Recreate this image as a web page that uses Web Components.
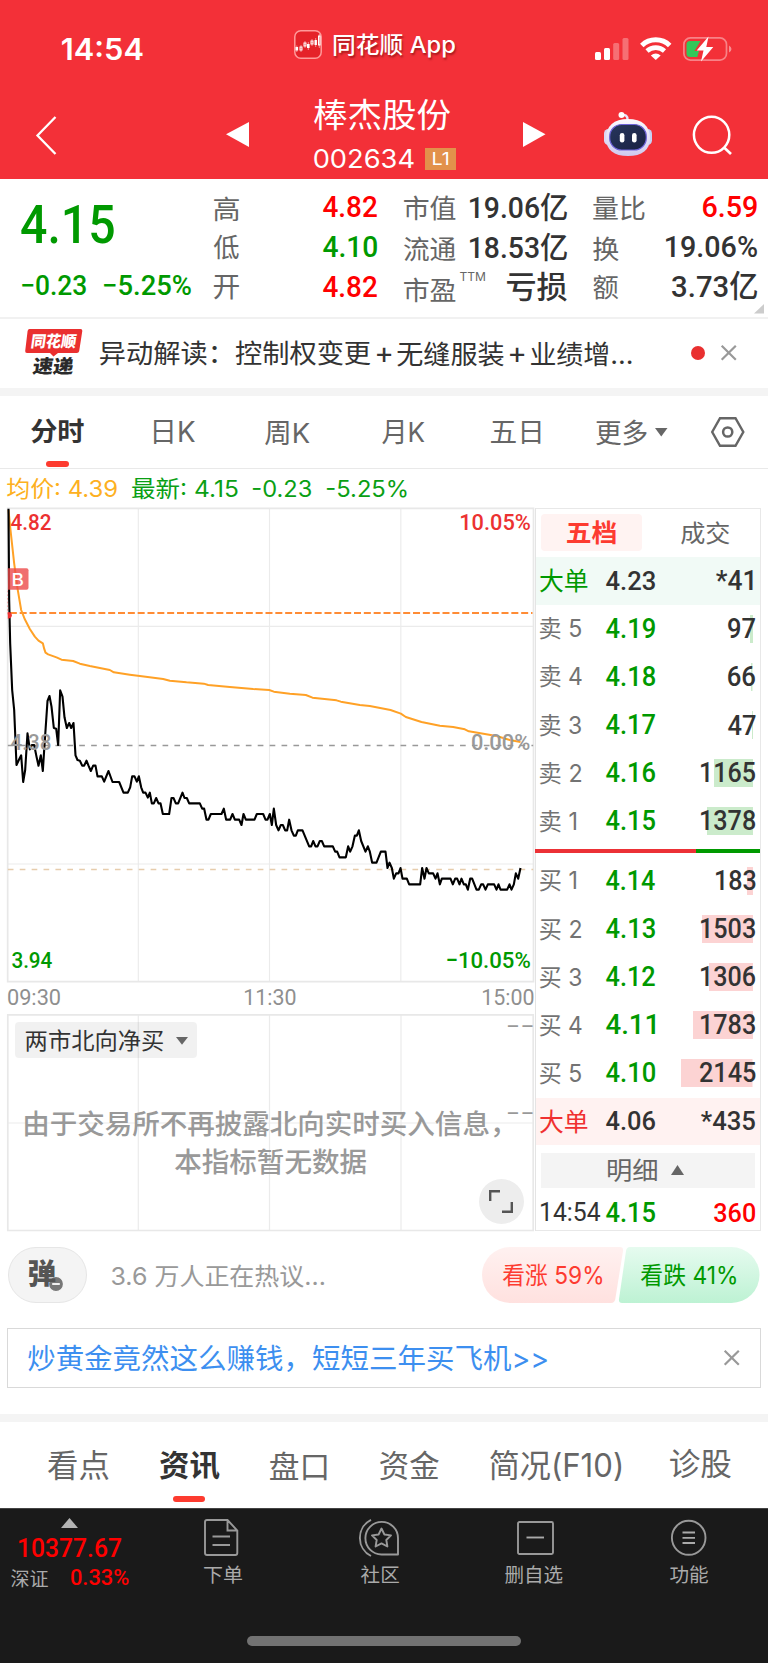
<!DOCTYPE html>
<html lang="zh-CN">
<head>
<meta charset="utf-8">
<title>棒杰股份 002634</title>
<style>
html,body{margin:0;padding:0;background:#fff}
body{width:768px;height:1663px;overflow:hidden;font-family:Inter,"Noto Sans CJK SC",sans-serif;color:#333}
</style>
</head>
<body>
<stock-page></stock-page>
<script>
const UI='Inter, "Noto Sans CJK SC", sans-serif';
const NUM='Roboto, "Noto Sans CJK SC", sans-serif';
const ctx=document.createElement('canvas').getContext('2d');

/* Text fitted to an exact glyph box: width w, height h. */
class FitText extends HTMLElement{
  connectedCallback(){
    const w=+this.getAttribute('w'),h=+this.getAttribute('h');
    const wt=this.getAttribute('weight')||'400';
    const fam=this.getAttribute('font')==='num'?NUM:UI;
    const text=this.textContent;
    ctx.font=`${wt} 100px ${fam}`;
    const m=ctx.measureText(text);
    const inkH=m.actualBoundingBoxAscent+m.actualBoundingBoxDescent;
    const inkW=m.actualBoundingBoxLeft+m.actualBoundingBoxRight;
    const fs=100*h/inkH,k=fs/100,sx=w/(inkW*k);
    const A=Math.round(m.fontBoundingBoxAscent*k),D=Math.round(m.fontBoundingBoxDescent*k);
    const L=Math.round(fs*1.2);
    const base=(L-(A+D))/2+A;
    const ty=m.actualBoundingBoxAscent*k-base, tx=m.actualBoundingBoxLeft*k*sx;
    const feat=text.endsWith('，')?'font-feature-settings:"halt";':'';
    this.attachShadow({mode:'open'}).innerHTML=`<style>
      :host{display:block;flex:none;width:${w}px;height:${h}px;white-space:pre}
      span{display:block;width:max-content;font:${wt} ${fs}px/${L}px ${fam};text-autospace:no-autospace;${feat}
        transform-origin:0 0;transform:translate(${tx}px,${ty}px) scaleX(${sx})}
    </style><span><slot></slot></span>`;
  }
}
customElements.define('fit-text',FitText);

const t=(x,y,w,h,text,o={})=>({x,y,w,html:m=>`<fit-text w="${w}" h="${h}" weight="${o.b||400}" font="${o.f||'ui'}" style="${m}color:${o.c||'inherit'};${o.s||''}">${text}</fit-text>`});
const n=(x,y,w,h,text,c,b=500)=>t(x,y,w,h,text,{f:'num',c,b});
const g=(x,y,w,h,inner,s='')=>({x,y,w,html:m=>`<svg width="${w}" height="${h}" viewBox="0 0 ${w} ${h}" style="${m}${s}">${inner}</svg>`});
const box=(x,y,w,h,s)=>({x,y,w,html:m=>`<i style="${m}width:${w}px;height:${h}px;${s}"></i>`});
/* One flex row; every item's margin is its distance from the item before it. */
const row=(x0,y0,H,items,s='')=>{
  let c=x0;
  return `<div class="row" style="height:${H}px;${s}">`+items.map(i=>{
    const m=`margin:${(i.y-y0).toFixed(2)}px 0 0 ${(i.x-c).toFixed(2)}px;`;c=i.x+i.w;return i.html(m);
  }).join('')+'</div>';
};
const BASE=`<style>:host{display:block}.row{display:flex;align-items:flex-start;box-sizing:border-box}.row>*{flex:none}i{display:block;box-sizing:border-box}svg{display:block;overflow:visible}.stack{display:grid}.stack>*{grid-area:1/1}</style>`;
const def=(name,css,html)=>customElements.define(name,class extends HTMLElement{
  constructor(){super();this.attachShadow({mode:'open'}).innerHTML=BASE+`<style>${css}</style>`+(typeof html==='function'?html():html);}
});
const GREEN='#009900',RED='#ff0000',G6='#666',G9='#999',K='#333';

def('status-bar',':host{height:84px;color:#fff}',row(0,0,84,[
  t(62,38.3,80.5,22.2,'14:54',{b:600}),
  g(293.5,30,28,29,`<rect x=".8" y=".8" width="26.4" height="27.4" rx="6" fill="#e52229" stroke="#ff9a9a" stroke-width="1.5"/>
   <g fill="#fff"><rect x="1.5" y="17" width="2.6" height="3.5"/><rect x="13" y="14" width="2.6" height="4"/><rect x="20.5" y="10" width="2.4" height="5"/></g>
   <g fill="none" stroke="#fff" stroke-width="1"><rect x="6" y="17" width="2" height="3"/><rect x="10" y="13" width="2" height="3"/><rect x="17" y="11" width="2" height="3"/><rect x="24.5" y="6" width="1.6" height="9"/><path d="M2.8 15.5V22M7 15V22M11 11V18M14.3 12V20M18 9V16M21.7 8V17M25.3 4V18" stroke-width=".5"/></g>`),
  t(334,33.8,121,24,'同花顺 App',{b:500,s:'text-shadow:1px 2px 2px rgba(90,0,0,.5);'}),
  g(595,38,34,22,`<g fill="#fff"><rect x="0" y="14" width="6" height="8" rx="1.5"/><rect x="9" y="10" width="6" height="12" rx="1.5"/><g opacity=".3"><rect x="18.2" y="5" width="6" height="17" rx="1.5"/><rect x="27.5" y="0" width="6" height="22" rx="1.5"/></g></g>`),
  g(640,36.3,31.5,24,`<g fill="none" stroke="#fff" stroke-width="5"><path d="M1.8 9.5A20 20 0 0 1 29.7 9.5"/><path d="M7 15A13 13 0 0 1 24.5 15" stroke-width="4.6"/></g><path d="M10.8 19.5Q15.75 15.5 20.7 19.5L15.75 24Z" fill="#fff"/>`),
  g(683,37,49,24,`<rect x=".9" y=".9" width="42.6" height="22.2" rx="6.5" fill="none" stroke="#fff" stroke-opacity=".4" stroke-width="1.7"/><path d="M7 4H17.5L11.5 14H16L14.3 20H7Q3.5 20 3.5 16.5V7.5Q3.5 4 7 4Z" fill="#34c759"/><path d="M46 8.5Q48.5 10 48.5 12Q48.5 14 46 15.5Z" fill="#fff" fill-opacity=".45"/><path d="M25.5 -.5L13.7 13.5H20.5L18 24.5L30.3 10H23.3Z" fill="#fff"/>`)
]));

def('title-bar',':host{height:95px;color:#fff}.mid{width:142px;height:95px}.code{display:flex}',()=>row(0,84,95,[
  g(36,116,20,39,`<path d="M19.5 1L1.5 19.5L19.5 38" fill="none" stroke="#fff" stroke-width="2.3"/>`),
  g(225.5,122.3,23,25,`<path d="M0 12.3L23 0V25Z" fill="#fff"/>`),
  {x:314.5,y:84,w:142,html:m=>`<div class="mid" style="${m}">`+
    row(314.5,84,64,[t(314.3,98.9,136.5,31.4,'棒杰股份')])+
    row(314.5,148,31,[t(314.3,148.6,99.5,19.4,'002634'),
      {x:424.6,y:148,w:31.4,html:mm=>`<div style="${mm}width:31.4px;height:21.7px;background:#e2914b">${row(424.6,148,21.7,[t(432.7,152.8,15,12.4,'L1')])}</div>`}])+`</div>`},
  g(523.3,122.3,22.5,25,`<path d="M22.5 12.3L0 0V25Z" fill="#fff"/>`),
  g(604,112,48,45,`<defs><linearGradient id="h" x1="0" y1="0" x2="0" y2="1"><stop offset="0" stop-color="#fbfaff"/><stop offset="1" stop-color="#cfc9ee"/></linearGradient><linearGradient id="f" x1="0" y1="0" x2="1" y2="1"><stop offset="0" stop-color="#27365c"/><stop offset="1" stop-color="#1a2142"/></linearGradient></defs>
   <path d="M17 3Q24 2 23.5 8" fill="none" stroke="#e8e4fa" stroke-width="2.4"/><circle cx="17.5" cy="3" r="3" fill="#fff"/>
   <rect x="0" y="17" width="9" height="16" rx="4.5" fill="#dcd7f3"/><rect x="39" y="17" width="9" height="16" rx="4.5" fill="#c6d2f5"/>
   <path d="M24 7C38 7 46 14 46 26C46 38 38 44 24 44C10 44 2 38 2 26C2 14 10 7 24 7Z" fill="url(#h)"/>
   <rect x="5.7" y="12.5" width="36.6" height="25.5" rx="12" fill="url(#f)" stroke="#6e63d8" stroke-width="1.2"/>
   <rect x="15.8" y="21" width="4.6" height="9.5" rx="2.3" fill="#fff"/><rect x="28" y="21" width="4.6" height="9.5" rx="2.3" fill="#fff"/>`),
  g(693.5,115.7,39,39,`<ellipse cx="18.6" cy="18.8" rx="17.7" ry="18" fill="none" stroke="#fff" stroke-width="2.5"/><path d="M30.8 31.3L38 38" stroke="#fff" stroke-width="2.7"/>`)
]));

def('quote-summary',':host{display:flex;height:140px;box-sizing:border-box;border-bottom:2px solid #f1f1f1;margin-top:0}.a{width:200px}.b{width:568px}',()=>`<div class="a">`+
 row(0,179,80,[n(20.7,205,92.8,39,'4.15',GREEN)])+
 row(0,259,50,[n(22,274.7,64,21,'−0.23',GREEN),n(104,274.7,87,21,'−5.25%',GREEN)])+`</div><div class="b">`+
 row(200,179,50,[t(213.8,196,25,25,'高',{c:G6}),n(322.6,196.3,54,22.3,'4.82',RED),t(404,196.2,51.5,25,'市值',{c:G6}),n(470,193.3,97,28,'19.06亿',K),t(593.3,196.3,51.5,24.5,'量比',{c:G6}),n(703,196.3,54,22.3,'6.59',RED)])+
 row(200,229,38,[t(213.8,236.2,25,25,'低',{c:G6}),n(322.6,236.3,54,22.3,'4.10',GREEN),t(404,236,51.5,25,'流通',{c:G6}),n(470,233.3,97,28,'18.53亿',K),t(593.3,236,25.5,25,'换',{c:G6}),n(666,236.3,91,22.3,'19.06%',K)])+
 row(200,267,50,[t(213.8,276.5,25,23.5,'开',{c:G6}),n(322.6,275.5,54,22.3,'4.82',RED),t(404,278,51.5,24.5,'市盈',{c:G6}),t(460,272,25,9,'TTM',{c:G6}),t(507,272,60,29,'亏损',{b:500,c:K}),t(593.3,275.5,25,25,'额',{c:G6}),n(672,272.3,85,28.5,'3.73亿',K),g(754,304,10,9.5,`<path d="M10 0V9.5H0Z" fill="#ccc"/>`)])+`</div>`);

def('news-strip',':host{height:77px;border-bottom:8px solid #f4f4f4;box-sizing:border-box}.logo{width:58px}',()=>row(0,319,69,[
  {x:24.5,y:329,w:58,html:m=>`<div class="logo stack" style="${m}"><svg width="58" height="27"><path d="M4.5 0H55.5Q57.6 0 57.3 2L54.2 22Q53.8 24 51.8 24H33L28.5 27.5L25 24H2Q0 24 .2 22L2.6 2Q3 0 4.5 0Z" fill="#ea2f2f"/></svg><div>`+
    row(24.5,329,29,[t(31.5,333.8,44,15.2,'同花顺',{b:900,c:'#fff',s:'transform:skewX(-8deg);'})])+
    row(24.5,358,18,[t(32.5,357.5,40.5,18.5,'速递',{b:900,c:'#2a2a2a',s:'transform:skewX(-8deg);'})])+`</div></div>`},
  t(100,341,270.5,25,'异动解读：控制权变更',{c:K}),t(377,347.5,14.3,14.3,'+',{c:K}),
  t(397,341,107,25,'无缝服装',{c:K}),t(510,347.5,14.3,14.3,'+',{c:K}),t(531.5,341,100.5,25,'业绩增...',{c:K}),
  box(691,346,14,14,'border-radius:50%;background:#e93030;'),
  g(720.7,345,15.5,15.5,`<path d="M.7.7L14.8 14.8M14.8.7L.7 14.8" stroke="#999" stroke-width="2.2"/>`)
]));

def('period-tabs',':host{height:73px;border-bottom:1px solid #e9e9e9;box-sizing:border-box}.on{width:53px;height:71px}',()=>row(0,396,72,[
  {x:31,y:396,w:53,html:m=>`<div class="on" style="${m}">${row(31,396,65,[t(31,420,53,25,'分时',{b:700,c:K})])}${row(31,461,6,[box(45.5,461,23.5,6,'border-radius:3px;background:#fd3b2f;')])}</div>`},
  t(154,421,41,24,'日K',{c:G6}),t(264.7,421,44.5,24.3,'周K',{c:G6}),t(381.6,421,42.5,24.3,'月K',{c:G6}),t(490.8,421,49.5,23.6,'五日',{c:G6}),t(596.5,419.5,51,25.5,'更多',{c:G6}),
  g(655,428,12.5,8.5,`<path d="M0 0H12.5L6.25 8.5Z" fill="#666"/>`),
  g(711.5,416.5,33.5,30,`<path d="M9 1.2H24.5L32.3 15L24.5 28.8H9L1.2 15Z" fill="none" stroke="#666" stroke-width="2.4"/><circle cx="16.7" cy="15" r="4.6" fill="none" stroke="#666" stroke-width="2.5"/>`)
]));

def('price-line',':host{height:39px}',()=>row(0,469,39,[
  t(7.3,478,110,21.3,'均价: 4.39',{c:'#fdb021'}),t(132,478,105.5,21.3,'最新: 4.15',{c:'#0a9f14'}),t(253,479.7,58,17.3,'-0.23',{c:'#0a9f14'}),t(327,479.7,79.5,17.3,'-5.25%',{c:'#0a9f14'})
]));

const PRICE='26,26 28,300 31,430 37,570 43,630 50,795 57,780 64,766 70,846 76,810 83,700 90,748 96,735 103,735 110,770 116,797 123,766 129,813 134,735 143,603 149,588 155,620 162,684 169,686 175,735 181,571 188,590 194,652 201,684 208,669 214,684 221,669 227,766 233,780 240,782 247,797 253,797 260,782 266,797 273,813 280,797 287,797 293,829 306,829 313,845 326,813 338,846 358,846 371,878 384,878 391,862 397,829 404,829 411,845 417,829 424,862 430,878 437,878 444,893 450,878 456,910 462,910 469,894 476,910 482,910 489,942 508,942 515,894 521,894 528,910 535,910 548,878 554,894 561,894 568,910 600,910 607,926 613,926 620,959 626,959 633,942 665,942 672,926 679,959 691,959 698,942 705,959 718,959 725,975 731,942 738,959 764,959 771,942 790,942 797,959 803,959 810,942 816,975 822,926 829,975 836,991 843,975 849,975 856,991 862,991 868,959 875,991 882,1007 888,1007 894,991 908,991 928,1039 934,1039 940,1023 947,1039 953,1039 960,1023 966,1023 973,1039 999,1039 1006,1055 1012,1055 1019,1072 1038,1072 1045,1039 1051,1055 1058,1039 1065,1007 1071,1007 1077,991 1084,1023 1097,1055 1104,1039 1110,1055 1117,1088 1130,1088 1143,1055 1157,1055 1163,1104 1169,1088 1176,1104 1182,1136 1189,1120 1196,1120 1202,1104 1208,1136 1221,1136 1228,1153 1261,1153 1267,1104 1274,1136 1280,1104 1287,1120 1300,1120 1307,1136 1313,1120 1320,1153 1326,1136 1352,1136 1359,1153 1366,1136 1372,1136 1379,1153 1385,1136 1392,1153 1398,1153 1404,1169 1411,1136 1417,1136 1430,1169 1437,1169 1444,1153 1450,1153 1457,1169 1464,1153 1483,1153 1490,1169 1496,1153 1502,1169 1522,1169 1529,1153 1535,1169 1542,1153 1548,1120 1555,1136 1562,1104';
const AVG='26,30 32,90 43,190 53,265 64,330 75,358 90,387 105,410 116,422 129,430 133,446 137,458 145,463 170,472 185,479 220,483 240,491 270,498 330,510 342,517 390,524 420,528 490,537 510,542 560,547 612,551 625,555 690,561 760,567 808,570 822,575 870,581 918,585 938,593 1010,601 1023,605 1080,615 1110,618 1172,630 1203,641 1218,651 1265,666 1320,677 1360,681 1395,688 1407,694 1490,708 1530,720 1562,726';

def('price-chart',':host{height:474px}',()=>`<div class="stack"><svg width="526" height="474" viewBox="21.5 24 1578 1422">
 <g fill="none" stroke="#ebebeb" stroke-width="4"><path d="M415.5 24V1446M809 24V1446M1203 24V1446M24 379H1601M24 1092H1601" stroke-width="3.4"/><path d="M23.5 25H1601V1445H23.5Z" stroke-width="5" stroke="#e8e8e8"/></g>
 <path d="M30 339H1598" stroke="#ff8c35" stroke-width="6.6" stroke-dasharray="21 8.5"/>
 <path d="M24 736.5H1600" stroke="#999" stroke-width="4.2" stroke-dasharray="17 18.7"/>
 <path d="M24 1108.5H1600" stroke="#e6ccac" stroke-width="4.2" stroke-dasharray="17 18.7"/>
 <polyline points="${AVG}" fill="none" stroke="#ffa126" stroke-width="6" stroke-linejoin="round"/>
 <polyline points="${PRICE}" fill="none" stroke="#000" stroke-width="6.3" stroke-linejoin="round"/>
 <path d="M23 272V345" stroke="#f3a0a0" stroke-width="2.5" stroke-dasharray="5 6"/><path d="M24 336Q36 336 36 346Q36 356 24 356Z" fill="#e33"/>
 <path d="M24 205H80Q86 205 86 211V263Q86 269 80 269H24Z" fill="#ec4a4a" fill-opacity=".8"/></svg><div>`+
 row(7,508,60,[n(11.2,514,40,17,'4.82','#ec3131'),n(461,514,69,17,'10.05%','#ec3131')])+
 row(7,568,160,[t(12.7,573.3,10,12.5,'B',{c:'#fff',b:500})])+
 row(7,728,210,[n(11.2,734,39.5,16.5,'4.38',G9),n(472,734,57.5,16.5,'0.00%',G9)])+
 row(7,938,44,[n(11.7,952,40,17,'3.94',GREEN),n(446.7,952,83,17,'−10.05%',GREEN)])+`</div></div>`);

def('time-axis',':host{height:32px}',()=>row(7,982,32,[n(8,989.3,52,16.5,'09:30','#8f8f8f',400),n(245,989.3,50.5,16.5,'11:30','#8f8f8f',400),n(483,989.3,50.5,16.5,'15:00','#8f8f8f',400)]));

def('north-chart',':host{height:217px}.pill{width:182px;height:36px;border-radius:4px;background:rgba(0,0,0,.055)}.btn{width:45px;height:45px;border-radius:50%;background:#ededed}',()=>`<div class="stack"><svg width="526" height="217"><g fill="none" stroke="#ebebeb" stroke-width="1.2"><path d="M131.3 0V217M262.5 0V217M394 0V217M0 109H526"/><path d="M.8 .9H526.2V216.5H.8Z" stroke="#e8e8e8" stroke-width="1.7"/></g></svg><div>`+
 row(7,1014,90,[{x:15,y:1022,w:182,html:m=>`<div class="pill" style="${m}">${row(15,1022,36,[t(25.7,1029.8,137,21.4,'两市北向净买',{c:K}),g(176,1036.5,12,7.7,`<path d="M0 0H12L6 7.7Z" fill="#666"/>`)])}</div>`},t(508.3,1025,24.5,2,'--',{c:G9})])+
 row(7,1104,42,[t(25,1110.8,475,27.5,'由于交易所不再披露北向实时买入信息，',{c:G9,b:500}),t(508.3,1112.3,24.5,2,'--',{c:G9})])+
 row(7,1146,32,[t(175.2,1149,191,26,'本指标暂无数据',{c:G9,b:500})])+
 row(7,1178,50,[{x:478.6,y:1179,w:45,html:m=>`<div class="btn" style="${m}">${row(479,1179,45,[g(489.5,1190,24,23,`<path d="M1.2 11V1.2H11M22.8 12V21.8H13" fill="none" stroke="#555" stroke-width="2.4"/>`)])}</div>`}])+`</div></div>`);

const bookRow=(y,label,lw,price,qty,qx,bar,kind,qr=755.5)=>{
  const c=kind==='s'?'#cbebcb':'#fcd3d3';
  const bg=bar?`background:linear-gradient(${c},${c}) ${752.7-bar-536}px 10px/${bar}px 28px no-repeat;`:'';
  return row(536,y,48.1,[t(540,y+(kind==='s'?12.3:13.4),lw,kind==='s'?22.6:21.4,label,{c:'#737373'}),n(605.7,y+13.6,49,19.8,price,GREEN),n(qx,y+13.6,qr-qx,19.8,qty,K)],bg);
};
def('order-book',':host{width:225px;height:723px;box-sizing:border-box;border:solid #e8e8e8;border-width:1px 1px 1px 0}.bar{display:flex;height:4px;margin:3px 0 4.5px -1px}.r{width:161px;background:#ec3136}.g{flex:1;background:#009900}',()=>
 row(536,509,48,[{x:541,y:514,w:100.5,html:m=>`<div style="${m}width:100.5px;height:37px;border-radius:4px;background:#fff3f2">${row(541,514,37,[t(567,520.5,49,23.5,'五档',{b:700,c:'#fd3b30'})])}</div>`},t(680.5,520.5,48.5,23,'成交',{c:G6})])+
 row(536,557,48.1,[t(539.7,569.2,47.5,23.3,'大单',{c:GREEN}),n(605.7,571.2,49,19.5,'4.23',K),n(716.5,571.2,36.5,19.5,'*41',K)],'background:#f1faf6;')+
 bookRow(605.1,'卖 5',41,'4.19','97',728.5,3,'s')+bookRow(653.2,'卖 4',41.5,'4.18','66',728.5,1.5,'s')+bookRow(701.3,'卖 3',41,'4.17','47',728,1,'s')+bookRow(749.4,'卖 2',41,'4.16','1165',701.5,39,'s')+bookRow(797.5,'卖 1',36,'4.15','1378',701.5,46,'s')+
 `<div class="bar"><div class="r"></div><div class="g"></div></div>`+
 bookRow(857.3,'买 1',36,'4.14','183',716,6,'b')+bookRow(905.4,'买 2',41,'4.13','1503',701.5,51,'b')+bookRow(953.5,'买 3',41,'4.12','1306',701.5,44,'b')+bookRow(1001.6,'买 4',41.5,'4.11','1783',701.5,60,'b')+bookRow(1049.7,'买 5',41,'4.10','2145',700,71.5,'b')+
 row(536,1097.8,47.5,[t(539.7,1109.9,47.5,23.3,'大单',{c:'#f03030'}),n(605.7,1111.5,49,19.5,'4.06',K),n(701.5,1111.5,54,19.5,'*435',K)],'background:#fff2f1;')+
 row(536,1145.3,42.7,[{x:540.5,y:1153,w:214.5,html:m=>`<div style="${m}width:214.5px;height:35px;background:#f4f4f4">${row(540.5,1153,35,[t(608.2,1159.5,48.7,22.7,'明细',{c:G6}),g(671.5,1165.3,13,10,`<path d="M0 10H13L6.5 0Z" fill="#666"/>`)])}</div>`}])+
 row(536,1188,40,[n(541,1203.2,59,19,'14:54',K,400),n(605.7,1202.9,49,19.5,'4.15',GREEN),n(714.5,1202.9,41,19.5,'360',RED)]));

def('market-area',':host{display:flex;height:723px;padding-left:7px}.l{width:529px;border-right:1px solid #e4e4e4;box-sizing:border-box}','<div class="l"><price-chart></price-chart><time-axis></time-axis><north-chart></north-chart></div><order-book></order-book>');

def('sentiment-row',':host{height:97px}.dan{width:79px;height:56px;border:1px solid #e6e6e6;border-radius:28px;background:#f4f4f4;box-sizing:border-box}.vote{width:277.5px}',()=>row(0,1231,97,[
 {x:8,y:1247,w:79,html:m=>`<div class="dan" style="${m}">${row(9,1248,53,[t(29,1259,26.5,28,'弹',{b:900,c:'#555'}),g(47.5,1275.5,16,16,`<circle cx="8" cy="8" r="7.6" fill="#777" stroke="#f4f4f4" stroke-width="1.4"/><path d="M4.2 8H11.8" stroke="#fff" stroke-width="1.8"/>`)])}</div>`},
 t(112,1264,212,23,'3.6 万人正在热议...',{c:G9}),
 {x:482,y:1247,w:277.5,html:m=>`<div class="vote stack" style="${m}"><svg width="277.5" height="56"><defs><linearGradient id="r" x2="0" y2="1"><stop stop-color="#fff1f0"/><stop offset="1" stop-color="#ffe1df"/></linearGradient><linearGradient id="g" x2="0" y2="1"><stop stop-color="#e6fbef"/><stop offset="1" stop-color="#bdf2d3"/></linearGradient></defs>
  <path d="M28 0H138Q141.5 0 141 4L133.3 52Q132.6 56 129 56H28A28 28 0 0 1 28 0Z" fill="url(#r)"/><path d="M148 0H249.5A28 28 0 0 1 249.5 56H140Q136.5 56 137 52L144 4Q144.6 0 148 0Z" fill="url(#g)"/></svg>`+
  row(482,1247,56,[t(502.7,1264.7,99,22,'看涨 59%',{c:'#fd3b30'}),t(641,1264.7,95,22,'看跌 41%',{c:GREEN})])+`</div>`}
]));

def('promo-box',':host{height:85.5px}',()=>row(8,1329,59.7,[t(28,1345.2,519,28,'炒黄金竟然这么赚钱，短短三年买飞机&gt;&gt;',{c:'#3d8ff0'}),g(724,1350,15.5,15.5,`<path d="M.7.7L14.8 14.8M14.8.7L.7 14.8" stroke="#999" stroke-width="2.2"/>`)],'margin:0 7px;border:1px solid #d9d9d9;'));

def('info-tabs',':host{height:94.5px;border-top:8px solid #f4f4f4;box-sizing:border-box}.on{width:59.5px}',()=>row(0,1421.5,86.5,[
 t(48,1450.2,60.5,29.5,'看点',{c:G6}),
 {x:159.5,y:1421.5,w:59.5,html:m=>`<div class="on" style="${m}">${row(159.5,1421.5,74.5,[t(159.5,1450.5,59.5,29,'资讯',{b:700,c:K})])}${row(159.5,1496,7,[box(173,1496,31.5,6.3,'border-radius:3px;background:#fd3b2f;')])}</div>`},
 t(270,1450.8,56.5,28.5,'盘口',{c:G6}),t(380,1450.5,59,29,'资金',{c:G6}),t(490,1450,131,30,'简况(F10)',{c:G6}),t(670.3,1450.2,61,29.3,'诊股',{c:G6})
]));

const navItem=(x,w,icon,label)=>({x,y:1508,w,html:m=>`<div style="${m}width:${w}px">${row(x,1508,54,[icon])}${row(x,1562,40,[label])}</div>`});
def('bottom-nav',':host{height:155px;background:#1a1a1a;border-top:1px solid #444;box-sizing:border-box}.ix{width:130px}',()=>row(0,1509,127,[
 {x:0,y:1509,w:130,html:m=>`<div class="ix" style="${m}">`+row(0,1509,24,[g(60.5,1518,17,10,`<path d="M0 10H17L8.5 0Z" fill="#b3b3b3"/>`)])+row(0,1533,30,[n(19.2,1537.5,102,19.3,'10377.67',RED)])+row(0,1563,30,[t(11,1570,37,17.6,'深证',{c:'#aaa'}),n(71,1569.3,57.5,16.6,'0.33%',RED)])+`</div>`},
 navItem(203.5,38,g(203.5,1519,34.5,37,`<path d="M3 1H23.5L33.3 11.5V34Q33.3 36 31.3 36H3Q1 36 1 34V3Q1 1 3 1ZM23.5 1V11.5H33.3M8.5 17.5H26M8.5 26H26" fill="none" stroke="#999" stroke-width="1.9"/>`),t(203.5,1566.3,38,17.8,'下单',{c:'#aaa'})),
 navItem(358.5,41,g(358.5,1518.5,39.5,37.5,`<path d="M39 35.5H22.5A16.3 16.3 0 1 1 39 19.2ZM12 .8A20.3 20.3 0 0 0 12 37M22.5 9.5L25.4 15.5L32 16.4L27.3 21L28.4 27.5L22.5 24.4L16.6 27.5L17.7 21L13 16.4L19.6 15.5Z" fill="none" stroke="#999" stroke-width="1.9" stroke-linejoin="round"/>`),t(361,1565.8,38,18,'社区',{c:'#aaa'})),
 navItem(504.5,58,g(517,1521,37,34,`<rect x="1" y="1" width="35" height="32" rx="1.5" fill="none" stroke="#999" stroke-width="1.9"/><path d="M9.5 16.5H27" stroke="#aaa" stroke-width="1.9"/>`),t(504.5,1565.8,57.5,18.2,'删自选',{c:'#aaa'})),
 navItem(670,38,g(671,1520,36,36,`<ellipse cx="17.7" cy="17.8" rx="16.8" ry="17" fill="none" stroke="#999" stroke-width="1.9"/><path d="M11.5 12.5H24M11.5 17.8H24M11.5 23H24" stroke="#aaa" stroke-width="1.8"/>`),t(670,1565.8,38,18.2,'功能',{c:'#aaa'}))
])+row(0,1636,20,[box(247,1636,274,10,'border-radius:5px;background:#727272;')]));

def('stock-page',':host{width:768px}header{background:#f33038;height:179px}','<header><status-bar></status-bar><title-bar></title-bar></header><main><quote-summary></quote-summary><news-strip></news-strip><period-tabs></period-tabs><price-line></price-line><market-area></market-area><sentiment-row></sentiment-row><promo-box></promo-box><info-tabs></info-tabs></main><bottom-nav></bottom-nav>');
</script>
</body>
</html>
